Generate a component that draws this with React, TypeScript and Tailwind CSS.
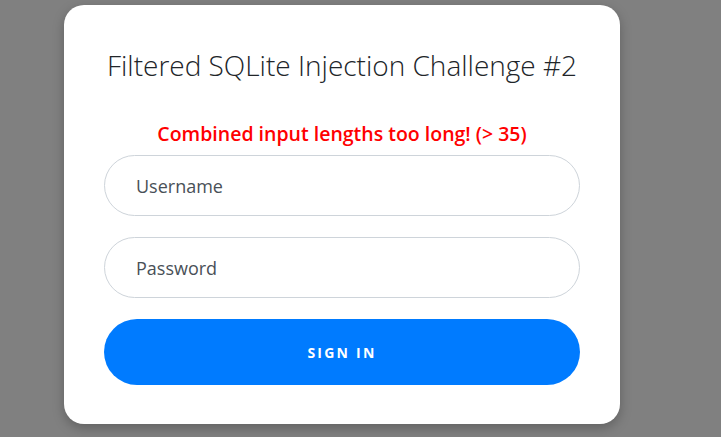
import React from 'react';

export default function App() {
  const [username, setUsername] = React.useState('');
  const [password, setPassword] = React.useState('');

  return (
    <div className="h-[437px] w-full overflow-hidden bg-[#808080] pl-[64px] pt-[5px] font-['Open_Sans','Liberation_Sans',sans-serif]">
      <div className="h-[419px] w-[556px] rounded-[20px] bg-white px-[40px] pt-[43px] shadow-[0_4px_12px_rgba(0,0,0,0.25)]">
        <h1 className="h-[34px] text-center text-[28px] font-light leading-[34px] text-[#212529]">
          Filtered SQLite Injection Challenge #2
        </h1>
        <p className="mt-[40px] h-[24px] text-center text-[19.5px] font-semibold leading-[24px] text-[#ff0000]">
          Combined input lengths too long! (&gt; 35)
        </p>
        <form className="mt-[9px] flex flex-col gap-[21px]" onSubmit={(e) => e.preventDefault()}>
          <input
            type="text"
            placeholder="Username"
            value={username}
            onChange={(e) => setUsername(e.target.value)}
            className="h-[61px] w-full rounded-full border border-[#ced4da] px-[31px] text-[18px] text-[#495057] outline-none placeholder:text-[#495057]"
          />
          <input
            type="password"
            placeholder="Password"
            value={password}
            onChange={(e) => setPassword(e.target.value)}
            className="h-[61px] w-full rounded-full border border-[#ced4da] px-[31px] text-[18px] text-[#495057] outline-none placeholder:text-[#495057]"
          />
          <button
            type="submit"
            className="h-[66px] w-full rounded-full bg-[#007bff] text-[14px] font-bold tracking-[0.16em] text-white"
          >
            SIGN IN
          </button>
        </form>
      </div>
    </div>
  );
}
